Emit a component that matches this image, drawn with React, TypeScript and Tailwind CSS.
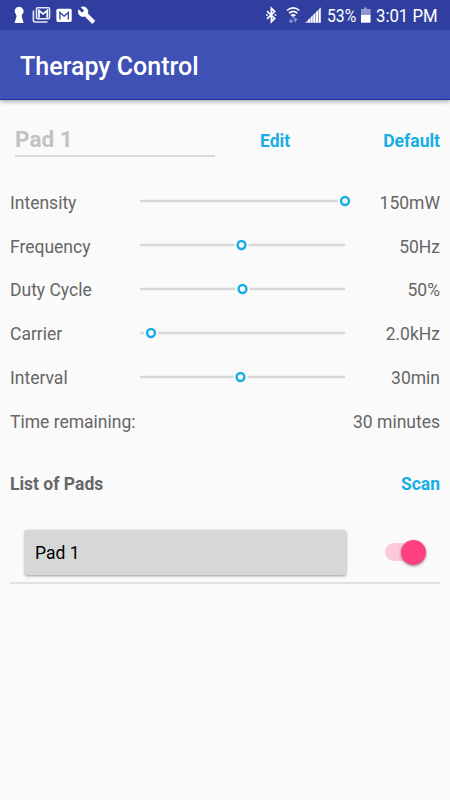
import { useState } from 'react'

type Setting = {
  label: string
  value: string
  position: number
}

// position is the thumb offset along the 205px track
const settings: Setting[] = [
  { label: 'Intensity', value: '150mW', position: 205 },
  { label: 'Frequency', value: '50Hz', position: 101.5 },
  { label: 'Duty Cycle', value: '50%', position: 102.5 },
  { label: 'Carrier', value: '2.0kHz', position: 11 },
  { label: 'Interval', value: '30min', position: 100.5 },
]

function StatusBar() {
  return (
    <div className="flex h-[30px] items-center justify-between bg-[#303f9f] text-white">
      <svg width="110" height="30" viewBox="0 0 110 30" fill="none">
        {/* Keyhole */}
        <path d="M19 6.8a4.4 4.4 0 0 0-3 7.6l.6 1.6-2 7h9l-2-7 .6-1.6a4.4 4.4 0 0 0-3.2-7.6z" fill="#fff" />
        {/* Stacked mail */}
        <path d="M33.4 10.5v9.8q0 1.7 1.7 1.7H47.5" stroke="#e4e7f6" strokeWidth="1.6" />
        <rect x="36.5" y="7.8" width="13" height="11" rx="1" stroke="#e4e7f6" strokeWidth="1.6" />
        <path d="M39 17.8V10.6l4.1 3.4 4.1-3.4v7.2" stroke="#fff" strokeWidth="1.7" />
        {/* Mail */}
        <rect x="56.4" y="8.7" width="15.3" height="13.2" rx="1.6" fill="#fff" />
        <path d="M59.9 19.4v-7l4.2 3.8 4.2-3.8v7" stroke="#303f9f" strokeWidth="1.3" />
        {/* Wrench */}
        <path
          transform="translate(77.4 6) scale(.76)"
          d="M22.7 19l-9.1-9.1c.9-2.3.4-5-1.5-6.9-2-2-5-2.4-7.4-1.3L9 6 6 9 1.6 4.7C.4 7.1.9 10.1 2.9 12.1c1.9 1.9 4.6 2.4 6.9 1.5l9.1 9.1c.4.4 1 .4 1.4 0l2.3-2.3c.5-.4.5-1.1.1-1.4z"
          fill="#fff"
          stroke="#fff"
          strokeWidth=".5"
        />
      </svg>
      <div className="flex h-full items-center">
        <svg width="67" height="30" viewBox="260 0 67 30" fill="none">
          {/* Bluetooth */}
          <path d="M267 11.2l7.7 7.2-3.3 3.3V8.3l3.3 3.2-7.7 7.3" stroke="#fff" strokeWidth="1.7" />
          <path d="M266 15h1.8M274.6 15h1.8" stroke="#fff" strokeWidth="1.7" />
          {/* Wifi */}
          <path d="M287 10.5q6.2-5.2 12.4 0M289 13.2q4.2-3.5 8.4 0M291 15.7q2.2-1.8 4.4 0" stroke="#fff" strokeWidth="1.6" />
          <path d="M293.2 18l-1.6-1.6h3.2z" fill="#fff" />
          <path d="M291 22.3v-3.5M289.2 20.7l1.8 1.6 1.8-1.6M295.4 18.5V22.3M293.6 20.1l1.8-1.6 1.8 1.6" stroke="#8f98ce" strokeWidth="1.3" />
          {/* Signal */}
          <path d="M305 22.8L320.7 7.5v15.3z" fill="#7983c2" />
          <path d="M305.5 22.8l1.8-1.8v1.8zM308 20l1.9-1.8v4.6H308zM310.7 17.4l1.9-1.8v7.2h-1.9zM313.4 14.7l1.9-1.8v9.9h-1.9zM316.1 12.1l1.9-1.8v12.5h-1.9zM318.8 9.5l1.9-1.9v15.2h-1.9z" fill="#fff" />
        </svg>
        <span className="w-[32px] text-[19px] leading-none">
          <span className="inline-block origin-left scale-x-[.83] whitespace-nowrap">53%</span>
        </span>
        <svg width="17" height="30" viewBox="0 0 17 30">
          <path d="M5 7.5h3V9h-3zM2 9h9.6v6.5H2z" fill="#8f98ce" />
          <path d="M2 15h9.6v7.7H2z" fill="#fff" />
        </svg>
        <span className="w-[74px] text-[19px] leading-none">
          <span className="inline-block origin-left scale-x-[.88] whitespace-nowrap">3:01 PM</span>
        </span>
      </div>
    </div>
  )
}

function Slider({ position }: { position: number }) {
  return (
    <svg className="overflow-visible" width="205" height="16" viewBox="0 0 205 16">
      <path d="M0 8h205" stroke="#d6d7d7" strokeWidth="2.5" />
      <circle cx={position} cy="8" r="7.3" fill="#fafafa" />
      <circle cx={position} cy="8" r="3.9" fill="#fafafa" stroke="#18aee3" strokeWidth="2.5" />
    </svg>
  )
}

function SettingRow({ label, value, position }: Setting) {
  return (
    <div className="grid h-[43.8px] grid-cols-[130px_205px_1fr] items-center">
      <span>{label}</span>
      <div className="-mt-[3px] flex">
        <Slider position={position} />
      </div>
      <span className="text-right">{value}</span>
    </div>
  )
}

export default function App() {
  const [enabled, setEnabled] = useState(true)

  return (
    <div className="h-[800px] w-[450px] overflow-hidden bg-[#fafafa] font-['Roboto',sans-serif] text-[17.5px] text-[#666666]">
      <div className="shadow-[0_1px_5px_rgba(0,0,0,0.4)]">
        <StatusBar />
        <header className="flex h-[70px] items-center border-b border-[#1b31a5] bg-[#3f51b5] px-5 pt-1">
          <h1 className="text-[25px] font-medium text-white">Therapy Control</h1>
        </header>
      </div>

      <main className="px-2.5">
        <div className="flex h-[81px] items-start pt-[23px]">
          <div className="ml-[5px] h-[34px] w-[200px] border-b-2 border-[#d9d9d9] text-[22.5px] leading-[33px] font-bold text-[#c2c2c2]">
            Pad 1
          </div>
          <button className="ml-[45px] pt-[5px] font-bold text-[#18aee3]">Edit</button>
          <button className="ml-auto pt-[5px] font-bold text-[#18aee3]">Default</button>
        </div>

        {settings.map((setting) => (
          <SettingRow key={setting.label} {...setting} />
        ))}
        <div className="flex h-[43.8px] items-center justify-between">
          <span>Time remaining:</span>
          <span>30 minutes</span>
        </div>

        <div className="mt-[18px] flex h-[44px] items-center justify-between font-bold">
          <h2>List of Pads</h2>
          <button className="text-[#18aee3]">Scan</button>
        </div>

        <div className="mt-[24px] flex h-[54px] items-start border-b-2 border-[#e1e1e1] pl-[15px]">
          <button className="h-[45px] w-[321px] rounded-[2px] bg-[#d6d8d7] pt-0.5 pl-2.5 text-left text-black shadow-[0_1px_3px_rgba(0,0,0,0.4)]">
            Pad 1
          </button>
          <button
            role="switch"
            aria-checked={enabled}
            onClick={() => setEnabled(!enabled)}
            className={`mt-[13.5px] ml-[39px] flex h-[18px] w-[41px] items-center rounded-full ${enabled ? 'justify-end bg-[#fcc9da]' : 'justify-start bg-[#bdbdbd]'}`}
          >
            <span className="size-[25px] shrink-0 rounded-full bg-[#ff4081] shadow-[0_1px_3px_rgba(0,0,0,0.45)]" />
          </button>
        </div>
      </main>
    </div>
  )
}
